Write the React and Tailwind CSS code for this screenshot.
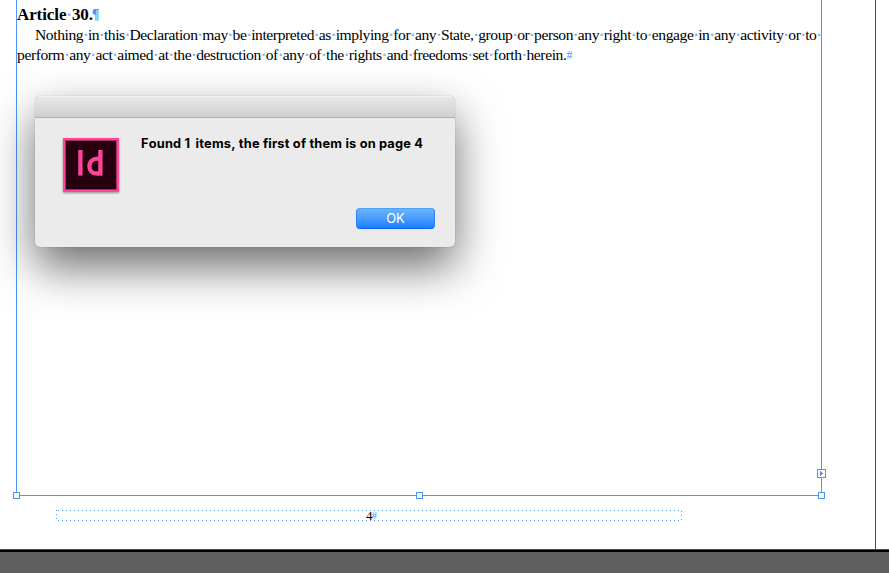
const firstLine =
  'Nothing in this Declaration may be interpreted as implying for any State, group or person any right to engage in any activity or to';
const secondLine =
  'perform any act aimed at the destruction of any of the rights and freedoms set forth herein.';

function SpaceDot() {
  return (
    <span className="flex w-[3px] grow justify-center font-bold text-[#7fb3fc]">·</span>
  );
}

function Line({ text, className, trailing, end }) {
  const words = text.split(' ');
  return (
    <div className={`flex h-5 text-[15.6px] leading-5 whitespace-nowrap ${className}`}>
      {words.map((word, i) => (
        <span key={i} className={i < words.length - 1 || trailing ? 'flex grow' : 'flex'}>
          {word}
          {(i < words.length - 1 || trailing) && <SpaceDot />}
        </span>
      ))}
      {end}
    </div>
  );
}

function Handle({ className }) {
  return <span className={`absolute size-[7px] border border-[#4a94fb] bg-white ${className}`} />;
}

function TextFrame() {
  return (
    <section className="relative ml-4 h-[496px] w-[806px] border-x border-b border-[#4a94fb] pt-[5px]">
      <h1 className="flex h-5 text-[17px] leading-5 font-bold tracking-[-0.1px]">
        Article<span className="text-[#7fb3fc]">·</span>30.
        <span className="-ml-px text-[14px] text-[#4a94fb]">¶</span>
      </h1>
      <Line text={firstLine} trailing className="ml-[18px] w-[786px] tracking-[-0.42px]" />
      <Line
        text={secondLine}
        className="w-[555px] tracking-[-0.42px]"
        end={<span className="text-[12px] text-[#4a94fb]">#</span>}
      />
      <Handle className="-bottom-1 -left-1" />
      <Handle className="-bottom-1 left-[399px]" />
      <Handle className="-right-1 -bottom-1" />
      <span className="absolute -right-[5px] bottom-[17px] flex size-[9px] items-center justify-center border border-[#4a94fb] bg-white">
        <svg className="h-[5px] w-[3px]" viewBox="0 0 3 5" shapeRendering="crispEdges">
          <path d="M0 0h1v1h1v1h1v1H2v1H1v1H0z" fill="#4a94fb" />
        </svg>
      </span>
    </section>
  );
}

function Dots() {
  return (
    <div className="ml-0.5 h-px bg-[repeating-linear-gradient(to_right,#4a94fb_0_1px,transparent_1px_4px)]" />
  );
}

function FolioFrame() {
  return (
    <section className="mt-3.5 ml-14 flex h-[11px] w-[626px]">
      <div className="h-full w-px bg-[repeating-linear-gradient(to_bottom,#4a94fb_0_1px,transparent_1px_4px)]" />
      <div className="-ml-px flex flex-1 flex-col">
        <Dots />
        <div className="flex h-[9px] items-center justify-center pl-1.5 text-[13px] leading-[9px]">
          4<span className="-ml-px text-[11px] text-[#4a94fb]">#</span>
        </div>
        <Dots />
      </div>
      <div className="mt-px h-2.5 w-px bg-[repeating-linear-gradient(to_bottom,#4a94fb_0_1px,transparent_1px_4px)]" />
    </section>
  );
}

function InDesignIcon() {
  return (
    <svg
      className="h-[54px] w-14 shrink-0 drop-shadow-[0_1px_1px_rgba(0,0,0,0.4)]"
      viewBox="0 0 56 54"
    >
      <rect width="56" height="54" fill="#ff4499" />
      <rect x="2" y="2" width="52" height="50" fill="#a52b60" />
      <rect x="3" y="3" width="50" height="48" fill="#26000f" />
      <g fill="none" stroke="#ff4499" strokeWidth="4.3">
        <path d="M17.4 12v25.6" />
        <path d="M37.4 12v23.5H34c-4.6 0-7.6-2.6-7.6-7.1 0-4.7 3.2-7.7 8.2-7.7h2.8" />
      </g>
    </svg>
  );
}

function AlertDialog() {
  return (
    <div
      role="dialog"
      className="absolute top-24 left-[35px] flex h-[151px] w-[420px] flex-col overflow-hidden rounded-[5px] bg-[#ebebeb] font-[Inter,sans-serif] shadow-[0_0_1px_rgba(0,0,0,0.45),0_20px_46px_rgba(0,0,0,0.58)]"
    >
      <div className="h-[22px] shrink-0 border-t border-b border-t-[#f2f2f2] border-b-[#b1b1b1] bg-linear-to-b from-[#e7e7e8] to-[#d0d0d1]" />
      <div className="flex flex-1 gap-[22px] pt-5 pl-7">
        <InDesignIcon />
        <p className="-mt-0.5 text-[12.8px] leading-4 font-bold tracking-[0.2px] whitespace-nowrap [font-kerning:none]">
          Found <span className="mr-0.5">1</span> items, the first of them is on page 4
        </p>
      </div>
      <button className="mr-5 mb-[18px] h-[21px] w-[79px] shrink-0 self-end rounded-[4px] border border-t-[#4ba0f8] border-r-[#2b84f8] border-b-[#0d61fb] border-l-[#2b84f8] bg-linear-to-b from-[#6cb3fa] to-[#1781fe] text-[13px] leading-[19px] text-white">
        OK
      </button>
    </div>
  );
}

export default function App() {
  return (
    <main className="relative flex h-[573px] w-[889px] flex-col overflow-hidden bg-white font-['Liberation_Serif',serif] text-black">
      <div className="h-[549px] w-[876px] border-r border-[#4a4a4a]">
        <TextFrame />
        <FolioFrame />
      </div>
      <div className="h-6 border-t border-[#4a4a4a] bg-[#5e5e5e]">
        <div className="h-0.5 bg-black" />
      </div>
      <AlertDialog />
    </main>
  );
}
